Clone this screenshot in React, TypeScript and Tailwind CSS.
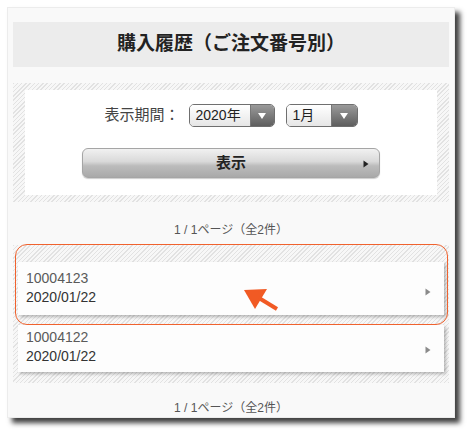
const hatch =
  'bg-[repeating-linear-gradient(135deg,#e2e2e2_0px,#e2e2e2_1px,#f7f7f7_1px,#f7f7f7_3px)]';

interface Order {
  id: string;
  date: string;
}

const orders: Order[] = [
  { id: '10004123', date: '2020/01/22' },
  { id: '10004122', date: '2020/01/22' },
];

function SelectBox({ value, width, arrowWidth }: { value: string; width: string; arrowWidth: string }) {
  return (
    <div className={`flex h-[23px] ${width} overflow-hidden rounded-[5px] border border-[#6f6f6f]`}>
      <div className="flex flex-1 items-center bg-[linear-gradient(#ffffff,#e6e6e6)] pl-[6px] text-[14px] text-[#222]">
        {value}
      </div>
      <div
        className={`flex ${arrowWidth} items-center justify-center border-l border-[#777] bg-[linear-gradient(#9a9a9a,#5e5e5e)]`}
      >
        <svg width="10" height="8" viewBox="0 0 10 8">
          <path d="M1 1h8L5 7z" fill="#fff" />
        </svg>
      </div>
    </div>
  );
}

function Pager() {
  return <span className="text-[12px] leading-[16px] text-[#555]">1 / 1ページ（全2件）</span>;
}

function OrderRow({ order, extra }: { order: Order; extra: string }) {
  return (
    <div className={`flex items-center justify-between bg-[#fdfdfd] pl-[8px] pr-[13px] shadow-[2px_2px_3px_rgba(0,0,0,0.25)] ${extra}`}>
      <div className="self-start">
        <div className="text-[14px] leading-[19px] text-[#5a5a5a]">{order.id}</div>
        <div className="text-[14px] leading-[19px] text-[#333]">{order.date}</div>
      </div>
      <svg width="6" height="8" viewBox="0 0 6 8">
        <path d="M0.5 0.5L5.5 4L0.5 7.5z" fill="#8a8a8a" />
      </svg>
    </div>
  );
}

export default function App() {
  return (
    <div
      className="h-[439px] w-[475px] bg-white pl-[7px] pt-[7px]"
      style={{ fontFamily: '"Liberation Sans", "Noto Sans CJK JP", sans-serif' }}
    >
      <div className="h-[411px] w-[448px] border border-[#ececec] bg-[#f9f9f9] px-[5px] pt-[14px] shadow-[5px_5px_5px_rgba(0,0,0,0.75)]">
        {/* Title */}
        <div className="flex h-[45px] items-center justify-center bg-[#ececec] text-[19px] font-bold text-[#222]">
          購入履歴（ご注文番号別）
        </div>

        {/* Period filter */}
        <div className={`mt-[16px] h-[119px] px-[12px] py-[7px] ${hatch}`}>
          <div className="flex h-full flex-col items-center bg-white pt-[14px]">
            <div className="flex items-center">
              <span className="mr-[9px] text-[15px] text-[#444]">表示期間：</span>
              <SelectBox value="2020年" width="w-[86px]" arrowWidth="w-[24px]" />
              <div className="w-[11px]" />
              <SelectBox value="1月" width="w-[72px]" arrowWidth="w-[26px]" />
            </div>
            <button className="relative mt-[21px] flex h-[30px] w-[298px] items-center justify-center rounded-[6px] border border-[#a5a5a5] bg-[linear-gradient(#f1f1f1,#d9d9d9_45%,#bcbcbc_60%,#a9a9a9)] text-[15px] font-bold text-[#222] shadow-[0_1px_1px_rgba(0,0,0,0.2)]">
              表示
              <svg className="absolute right-[10px] top-[11px]" width="6" height="8" viewBox="0 0 6 8">
                <path d="M0.5 0.5L5.5 4L0.5 7.5z" fill="#222" />
              </svg>
            </button>
          </div>
        </div>

        {/* Top pager */}
        <div className="flex h-[43px] items-end justify-center pb-[7px]">
          <Pager />
        </div>

        {/* Order list */}
        <div className={`relative h-[138px] px-[5px] pt-[17px] ${hatch}`}>
          <OrderRow order={orders[0]} extra="h-[53px] pt-[7px]" />
          <OrderRow order={orders[1]} extra="mt-[10px] h-[47px] pt-[3px]" />

          <div className="pointer-events-none absolute left-[2px] top-[-1px] h-[81px] w-[433px] rounded-[12px] border-[1.5px] border-[#f0622e]" />
          <svg className="pointer-events-none absolute left-[225px] top-[38px]" width="45" height="35" viewBox="0 0 45 35">
            <path d="M6 7L29 6L17 26z" fill="#f15a24" />
            <path d="M21 15L39 26" stroke="#f15a24" strokeWidth="4" strokeLinecap="butt" />
          </svg>
        </div>

        {/* Bottom pager */}
        <div className="flex justify-center pt-[17px]">
          <Pager />
        </div>
      </div>
    </div>
  );
}
